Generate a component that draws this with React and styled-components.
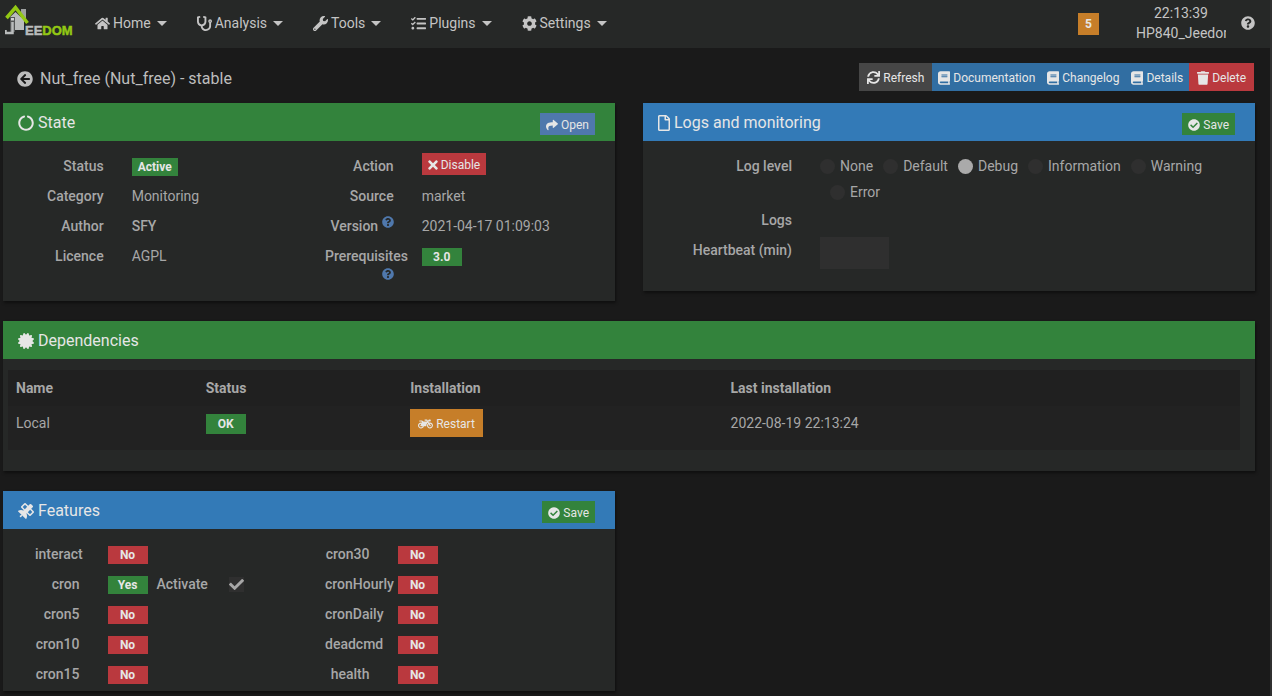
import React from "react";
import styled, { createGlobalStyle } from "styled-components";
import {
  FaHome, FaStethoscope, FaWrench, FaTasks, FaCog, FaQuestionCircle,
  FaArrowCircleLeft, FaSync, FaBook, FaTrash, FaCircleNotch, FaShare, FaRegFile,
  FaCheckCircle, FaTimes, FaCertificate, FaMotorcycle, FaSatellite, FaCheck,
} from "react-icons/fa";

const colors = {
  page: "#1a1a1a",
  panel: "#262827",
  text: "#a7a7a7",
  bright: "#e6e6e6",
  green: "#33833c",
  blue: "#337ab7",
  darkBlue: "#316ea2",
  openBlue: "#4f78ac",
  red: "#ba393e",
  orange: "#c67e29",
  grey: "#464646",
  field: "#2f2f2f",
};

const GlobalStyle = createGlobalStyle`
  * { box-sizing: border-box; }
  body {
    margin: 0;
    background: ${colors.page};
    color: ${colors.text};
    font-family: Roboto, "Liberation Sans", sans-serif;
    font-size: 14px;
    line-height: 22px;
  }
  button, input { font: inherit; }
  a { color: inherit; text-decoration: none; }
  svg { flex-shrink: 0; }
`;

const Page = styled.div`
  min-height: 100vh;
  border-right: 2px solid #303030;
`;

const Navbar = styled.header`
  display: flex;
  align-items: flex-start;
  height: 48px;
  padding: 0 15px 0 5px;
  background: ${colors.panel};
  color: #c4c4c4;
`;

const LogoLink = styled.a`
  width: 75px;
  padding-top: 4px;
  svg { display: block; }
`;

const NavMenu = styled.nav`
  display: flex;
  flex: 1;
`;

const NavItem = styled.a`
  display: flex;
  align-items: center;
  gap: 3px;
  height: 46px;
  padding: 0 15px;
  svg { font-size: 15px; }
`;

const Caret = styled.span`
  margin-left: 3px;
  border: 5px solid transparent;
  border-top-color: currentColor;
  border-bottom: 0;
`;

const UpdateCount = styled.a`
  margin: 13px 37px 0 0;
  padding: 0 7px;
  background: ${colors.orange};
  color: ${colors.bright};
  font-size: 12px;
  font-weight: 700;
`;

const ServerInfo = styled.div`
  width: 90px;
  margin-top: 3px;
  overflow: hidden;
  line-height: 20px;
  text-align: center;
  white-space: nowrap;
`;

const HelpLink = styled.a`
  display: flex;
  align-items: center;
  height: 46px;
  margin-left: 15px;
`;

const Main = styled.main`
  display: flex;
  flex-direction: column;
  gap: 20px;
  padding: 15px 15px 5px 3px;
`;

const TitleRow = styled.div`
  display: flex;
  justify-content: space-between;
  align-items: center;
  margin-bottom: -8px;
  padding: 0 1px 0 14px;
`;

const PluginTitle = styled.h1`
  display: flex;
  align-items: center;
  gap: 7px;
  margin: 0;
  padding-top: 4px;
  font-size: 16px;
  font-weight: 400;
  color: #bdbdbd;
`;

const Toolbar = styled.div`
  display: flex;
`;

const Button = styled.button`
  display: inline-flex;
  align-items: center;
  gap: 3px;
  height: ${(p) => (p.$small ? 22 : 28)}px;
  padding: 1px ${(p) => (p.$small || p.$tight ? 6 : 8)}px 0;
  border: 0;
  background: ${(p) => colors[p.$color]};
  color: ${colors.bright};
  font-size: 12px;
  vertical-align: top;
  white-space: nowrap;
  cursor: pointer;
`;

const RefreshIcon = styled(FaSync)`
  width: 13px;
  height: 13px;
`;

const BookIcon = styled(FaBook)`
  width: 12px;
  height: 14px;
`;

const TrashIcon = styled(FaTrash)`
  width: 12px;
  height: 14px;
`;

const CloseIcon = styled(FaTimes)`
  width: 10px;
  height: 14px;
`;

const FileIcon = styled(FaRegFile)`
  width: 12px;
  height: 16px;
`;

const RideIcon = styled(FaMotorcycle)`
  width: 15px;
  height: 12px;
`;

const Columns = styled.div`
  display: grid;
  grid-template-columns: 1fr 1fr;
  align-items: start;
  gap: 28px;
`;

const Panel = styled.section`
  background: ${colors.panel};
  box-shadow: 1px 2px 3px rgba(0, 0, 0, 0.45);
`;

const PanelHeader = styled.div`
  display: flex;
  justify-content: space-between;
  align-items: flex-end;
  height: 38px;
  padding: 6px 20px 6px 15px;
  background: ${(p) => colors[p.$color]};
  color: ${colors.bright};
`;

const PanelTitle = styled.h2`
  display: flex;
  align-items: center;
  gap: 4px;
  margin: 0;
  font-size: 16px;
  font-weight: 400;
  line-height: 24px;
`;

const PanelBody = styled.div`
  display: grid;
  grid-template-columns: ${(p) => (p.$split ? "1fr 1fr" : "1fr")};
  padding: 10px 14px ${(p) => p.$bottom}px 18px;
`;

const Row = styled.div`
  display: grid;
  grid-template-columns: ${(p) => p.$label || "1fr 2fr"};
  min-height: 30px;
  padding-bottom: 2px;
`;

const labelStyle = `
  min-width: 0;
  padding: 4px 14px 0;
  font-weight: 500;
  text-align: right;
`;

const FieldName = styled.div`${labelStyle}`;
const FieldLabel = styled.label`${labelStyle}`;

const Value = styled.div`
  min-width: 0;
  padding: ${(p) => (p.$control ? 2 : 4)}px 14px 0;
  font-weight: ${(p) => (p.$strong ? 500 : 400)};
`;

const Badge = styled.span`
  display: inline-block;
  min-width: 40px;
  padding: 0 6px;
  background: ${(p) => colors[p.$color]};
  color: ${colors.bright};
  font-size: 12px;
  font-weight: 700;
  line-height: ${(p) => (p.$tall ? 20 : 18)}px;
  text-align: center;
`;

const Hint = styled.span`
  color: ${colors.openBlue};
  font-size: 12px;
  line-height: 0;
  svg { vertical-align: 3px; }
`;

const Radios = styled.div`
  margin: -2px 0;
  line-height: 26px;
`;

const RadioLabel = styled.label`
  display: inline-flex;
  align-items: center;
  gap: 5px;
  vertical-align: top;
  &:not(:first-child) { margin-left: 10px; }
`;

const Radio = styled.input`
  appearance: none;
  width: 15px;
  height: 15px;
  margin: 0;
  border-radius: 50%;
  background: ${colors.field};
  &:checked { background: #aaaaaa; }
`;

const HeartbeatInput = styled.input`
  display: block;
  width: 69px;
  height: 32px;
  padding: 4px 8px;
  border: 0;
  background: ${colors.field};
  color: ${colors.text};
`;

const TableWrap = styled.div`
  padding: 11px 15px 21px 5px;
`;

const Table = styled.table`
  width: 100%;
  table-layout: fixed;
  border-collapse: collapse;
  background: #222222;
  text-align: left;
  thead { background: #202020; }
  th { padding: 7px 8px; font-weight: 700; }
  td { padding: 3px 8px 13px; line-height: 28px; vertical-align: top; }
`;

const FeatureValue = styled(Value)`
  display: flex;
  align-items: center;
`;

const ActivateLabel = styled.label`
  display: flex;
  align-items: center;
  align-self: flex-start;
  gap: 21px;
  margin-left: 9px;
  font-weight: 500;
`;

const CheckWrap = styled.span`
  display: grid;
  place-items: center;
  & > * { grid-area: 1 / 1; }
  svg { pointer-events: none; }
`;

const Checkbox = styled.input`
  appearance: none;
  width: 15px;
  height: 15px;
  margin: 0;
  background: ${colors.field};
  & + svg { visibility: hidden; }
  &:checked + svg { visibility: visible; }
`;

function Logo() {
  return (
    <svg width="70" height="34" viewBox="0 0 70 34" aria-label="Jeedom">
      <path d="M16 5 H21 V14 H16 Z" fill="#9ea1a1" />
      <path d="M5 13 L10.500 8 L19 16 V26 H5 Z" fill="#b9bcbc" />
      <path d="M5 13 H10 V28 H5 Z" fill="#555858" />
      <path d="M6 14 H9 V16.500 H6 Z" fill="#d0d2d2" />
      <path d="M7.500 18 V29 H0.500 V26" fill="none" stroke="#b9bcbc" strokeWidth="2.500" />
      <path d="M1.500 14 L10.500 3.500 L22.500 19" fill="none" stroke="#93c814" strokeWidth="3.500" />
      <text x="20" y="31" fontFamily="Liberation Sans" fontWeight="700" fontSize="13">
        <tspan fill="#b9bcbc" stroke="#b9bcbc" strokeWidth="0.500">EE</tspan>
        <tspan fill="#93c814" stroke="#93c814" strokeWidth="0.500">DOM</tspan>
      </text>
    </svg>
  );
}

const menu = [
  [FaHome, "Home"],
  [FaStethoscope, "Analysis"],
  [FaWrench, "Tools"],
  [FaTasks, "Plugins"],
  [FaCog, "Settings"],
];

const tools = [
  [RefreshIcon, "Refresh", "grey"],
  [BookIcon, "Documentation", "darkBlue"],
  [BookIcon, "Changelog", "darkBlue"],
  [BookIcon, "Details", "darkBlue"],
  [TrashIcon, "Delete", "red"],
];

const levels = ["None", "Default", "Debug", "Information", "Warning", "Error"];

const features = [
  ["interact", "cron30"],
  ["cron", "cronHourly"],
  ["cron5", "cronDaily"],
  ["cron10", "deadcmd"],
  ["cron15", "health"],
];

function Field({ name, strong, control, children }) {
  return (
    <Row>
      <FieldName>{name}</FieldName>
      <Value $strong={strong} $control={control}>{children}</Value>
    </Row>
  );
}

function Feature({ name }) {
  const on = name === "cron";
  return (
    <Row $label="1fr 3fr">
      <FieldName>{name}</FieldName>
      <FeatureValue>
        <Badge $color={on ? "green" : "red"}>{on ? "Yes" : "No"}</Badge>
        {on && (
          <ActivateLabel>
            Activate
            <CheckWrap>
              <Checkbox type="checkbox" defaultChecked />
              <FaCheck size={15} />
            </CheckWrap>
          </ActivateLabel>
        )}
      </FeatureValue>
    </Row>
  );
}

function SaveButton() {
  return (
    <Button $small $color="green"><FaCheckCircle size={12} />Save</Button>
  );
}

export default function App() {
  return (
    <Page>
      <GlobalStyle />
      <Navbar>
        <LogoLink href="#home"><Logo /></LogoLink>
        <NavMenu>
          {menu.map(([Icon, name]) => (
            <NavItem href={`#${name.toLowerCase()}`} key={name}>
              <Icon />{name}<Caret />
            </NavItem>
          ))}
        </NavMenu>
        <UpdateCount href="#updates">5</UpdateCount>
        <ServerInfo>
          <div>22:13:39</div>
          <div>HP840_Jeedom</div>
        </ServerInfo>
        <HelpLink href="#help" aria-label="Help"><FaQuestionCircle size={14} /></HelpLink>
      </Navbar>
      <Main>
        <TitleRow>
          <PluginTitle>
            <FaArrowCircleLeft />Nut_free (Nut_free) - stable
          </PluginTitle>
          <Toolbar>
            {tools.map(([Icon, name, color]) => (
              <Button key={name} $color={color} $tight={color === "darkBlue"}>
                <Icon />{name}
              </Button>
            ))}
          </Toolbar>
        </TitleRow>
        <Columns>
          <Panel>
            <PanelHeader $color="green">
              <PanelTitle><FaCircleNotch />State</PanelTitle>
              <Button $small $color="openBlue"><FaShare size={12} />Open</Button>
            </PanelHeader>
            <PanelBody $split $bottom={10}>
              <div>
                <Field name="Status"><Badge $color="green">Active</Badge></Field>
                <Field name="Category">Monitoring</Field>
                <Field name="Author" strong>SFY</Field>
                <Field name="Licence">AGPL</Field>
              </div>
              <div>
                <Field name="Action" control>
                  <Button $small $color="red"><CloseIcon />Disable</Button>
                </Field>
                <Field name="Source">market</Field>
                <Field name={<>Version <Hint><FaQuestionCircle /></Hint></>}>
                  2021-04-17 01:09:03
                </Field>
                <Field name={<>Prerequisites <Hint><FaQuestionCircle /></Hint></>}>
                  <Badge $color="green">3.0</Badge>
                </Field>
              </div>
            </PanelBody>
          </Panel>
          <Panel>
            <PanelHeader $color="blue">
              <PanelTitle><FileIcon />Logs and monitoring</PanelTitle>
              <SaveButton />
            </PanelHeader>
            <PanelBody $bottom={20}>
              <Row $label="1fr 3fr">
                <FieldName>Log level</FieldName>
                <Value>
                  <Radios role="radiogroup" aria-label="Log level">
                    {levels.map((name) => (
                      <RadioLabel key={name}>
                        <Radio type="radio" name="level" defaultChecked={name === "Debug"} />
                        {name}
                      </RadioLabel>
                    ))}
                  </Radios>
                </Value>
              </Row>
              <Row $label="1fr 3fr">
                <FieldName>Logs</FieldName>
              </Row>
              <Row $label="1fr 3fr">
                <FieldLabel htmlFor="heartbeat">Heartbeat (min)</FieldLabel>
                <Value $control><HeartbeatInput id="heartbeat" /></Value>
              </Row>
            </PanelBody>
          </Panel>
        </Columns>
        <Panel>
          <PanelHeader $color="green">
            <PanelTitle><FaCertificate />Dependencies</PanelTitle>
          </PanelHeader>
          <TableWrap>
            <Table>
              <colgroup>
                <col width="15.4%" />
                <col width="16.6%" />
                <col width="26%" />
                <col />
              </colgroup>
              <thead>
                <tr>
                  <th>Name</th>
                  <th>Status</th>
                  <th>Installation</th>
                  <th>Last installation</th>
                </tr>
              </thead>
              <tbody>
                <tr>
                  <td>Local</td>
                  <td><Badge $tall $color="green">OK</Badge></td>
                  <td><Button $color="orange"><RideIcon />Restart</Button></td>
                  <td>2022-08-19 22:13:24</td>
                </tr>
              </tbody>
            </Table>
          </TableWrap>
        </Panel>
        <Columns>
          <Panel>
            <PanelHeader $color="blue">
              <PanelTitle><FaSatellite />Features</PanelTitle>
              <SaveButton />
            </PanelHeader>
            <PanelBody $split $bottom={2}>
              {features.flat().map((name) => <Feature key={name} name={name} />)}
            </PanelBody>
          </Panel>
        </Columns>
      </Main>
    </Page>
  );
}
